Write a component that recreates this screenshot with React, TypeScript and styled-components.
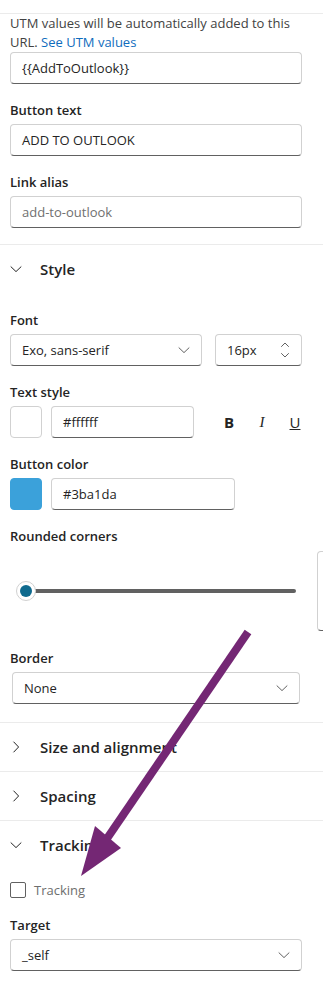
import React from 'react';
import styled, { createGlobalStyle } from 'styled-components';

const GlobalStyle = createGlobalStyle`
  html, body {
    margin: 0;
    padding: 0;
    background: #ffffff;
    overflow: hidden;
  }
  body {
    font-family: "Segoe UI", "Open Sans", "Liberation Sans", sans-serif;
    color: #242424;
  }
`;

const Panel = styled.div`
  position: relative;
  width: 323px;
  height: 993px;
  overflow: hidden;
  background: #ffffff;
  padding-top: 13px;
  box-sizing: border-box;
`;

const Section = styled.div<{ $top?: number; $bottom?: number; $gap?: number; $line?: boolean }>`
  display: flex;
  flex-direction: column;
  gap: ${(p) => p.$gap ?? 16}px;
  padding: ${(p) => p.$top ?? 0}px 21px ${(p) => p.$bottom ?? 16}px 10px;
  border-top: ${(p) => (p.$line ? '1px solid #ebebeb' : 'none')};
`;

const Note = styled.p`
  margin: 0;
  font-size: 13px;
  line-height: 19px;
  color: #424242;
`;

const Link = styled.a`
  color: #0f6cbd;
  text-decoration: none;
`;

const Field = styled.div`
  display: flex;
  flex-direction: column;
  gap: 4px;
`;

const Label = styled.label`
  font-size: 13px;
  font-weight: 600;
  line-height: 20px;
  color: #242424;
`;

const Box = styled.div<{ $width?: number; $inset?: number }>`
  display: flex;
  align-items: center;
  box-sizing: border-box;
  height: 32px;
  width: ${(p) => (p.$width ? `${p.$width}px` : 'auto')};
  margin: 0 ${(p) => p.$inset ?? 0}px;
  padding: 0 11px;
  border: 1px solid #d1d1d1;
  border-bottom-color: #616161;
  border-radius: 4px;
  font-size: 13px;
  color: #242424;
  background: #ffffff;
`;

const Value = styled.span<{ $muted?: boolean }>`
  flex: 1;
  color: ${(p) => (p.$muted ? '#707070' : '#242424')};
`;

const Row = styled.div<{ $gap?: number }>`
  display: flex;
  align-items: center;
  gap: ${(p) => p.$gap ?? 9}px;
`;

const Swatch = styled.div<{ $color: string }>`
  width: 32px;
  height: 32px;
  flex: none;
  box-sizing: border-box;
  border-radius: 4px;
  background: ${(p) => p.$color};
  border: 1px solid ${(p) => (p.$color === '#ffffff' ? '#d1d1d1' : '#3ba1da')};
`;

const Formats = styled.div`
  display: flex;
  align-items: center;
  gap: 19px;
  margin-left: 19px;
`;

const FormatButton = styled.span<{ $kind: 'b' | 'i' | 'u' }>`
  width: 14px;
  text-align: center;
  font-size: 15px;
  line-height: 20px;
  color: #242424;
  font-weight: ${(p) => (p.$kind === 'b' ? 700 : 400)};
  font-style: ${(p) => (p.$kind === 'i' ? 'italic' : 'normal')};
  text-decoration: ${(p) => (p.$kind === 'u' ? 'underline' : 'none')};
  font-family: ${(p) => (p.$kind === 'i' ? '"Liberation Serif", serif' : 'inherit')};
`;

const SliderRow = styled.div`
  display: flex;
  align-items: center;
  height: 82px;
  margin-right: -40px;
`;

const Track = styled.div`
  position: relative;
  flex: none;
  width: 286px;
  height: 24px;
  display: flex;
  align-items: center;
`;

const Rail = styled.div`
  margin-left: 16px;
  width: 270px;
  height: 4px;
  border-radius: 2px;
  background: #616161;
`;

const Thumb = styled.div`
  position: absolute;
  left: 6px;
  top: 2px;
  width: 20px;
  height: 20px;
  box-sizing: border-box;
  border-radius: 50%;
  border: 1px solid #d1d1d1;
  background: #ffffff;
  display: flex;
  align-items: center;
  justify-content: center;

  &::after {
    content: '';
    width: 12px;
    height: 12px;
    border-radius: 50%;
    background: #0f6a8e;
  }
`;

const CutBox = styled.div`
  flex: none;
  margin-left: 21px;
  width: 60px;
  height: 80px;
  box-sizing: border-box;
  border: 1px solid #d1d1d1;
  border-bottom-color: #616161;
  border-radius: 4px;
`;

const Header = styled.div`
  display: flex;
  align-items: center;
  height: 48px;
  padding-left: 10px;
  gap: 18px;
  border-top: 1px solid #ebebeb;
  font-size: 15px;
  font-weight: 600;
  color: #242424;
`;

const Check = styled.div`
  width: 16px;
  height: 16px;
  box-sizing: border-box;
  border: 1px solid #616161;
  border-radius: 2px;
`;

const CheckText = styled.span`
  font-size: 13px;
  line-height: 20px;
  color: #6e6e6e;
`;

const Overlay = styled.svg`
  position: absolute;
  left: 0;
  top: 0;
  pointer-events: none;
`;

const Chevron: React.FC<{ dir: 'down' | 'right'; size?: number; color?: string }> = ({
  dir,
  size = 12,
  color = '#242424',
}) => (
  <svg width={size} height={size} viewBox="0 0 12 12" fill="none">
    {dir === 'down' ? (
      <path d="M1 3.8 6 8.6l5-4.8" stroke={color} strokeWidth="1" strokeLinecap="round" strokeLinejoin="round" />
    ) : (
      <path d="M3.8 1 8.6 6l-4.8 5" stroke={color} strokeWidth="1" strokeLinecap="round" strokeLinejoin="round" />
    )}
  </svg>
);

const Spinner = () => (
  <svg width="10" height="20" viewBox="0 0 10 20" fill="none">
    <path d="M1.5 6.5 5 3l3.5 3.5" stroke="#616161" strokeWidth="1" strokeLinecap="round" strokeLinejoin="round" />
    <path d="M1.5 13.5 5 17l3.5-3.5" stroke="#616161" strokeWidth="1" strokeLinecap="round" strokeLinejoin="round" />
  </svg>
);

const Select: React.FC<{ value: string; width?: number; inset?: number }> = ({ value, width, inset }) => (
  <Box $width={width} $inset={inset}>
    <Value>{value}</Value>
    <Chevron dir="down" color="#616161" />
  </Box>
);

const App: React.FC = () => {
  return (
    <Panel>
      <GlobalStyle />
      <Section $line>
        <div>
          <Note>
            UTM values will be automatically added to this URL. <Link href="#">See UTM values</Link>
          </Note>
          <Box>
            <Value>{'{{AddToOutlook}}'}</Value>
          </Box>
        </div>
        <Field>
          <Label>Button text</Label>
          <Box>
            <Value>ADD TO OUTLOOK</Value>
          </Box>
        </Field>
        <Field>
          <Label>Link alias</Label>
          <Box>
            <Value $muted>add-to-outlook</Value>
          </Box>
        </Field>
      </Section>

      <Header>
        <Chevron dir="down" />
        Style
      </Header>
      <Section $top={17} $bottom={18}>
        <Field>
          <Label>Font</Label>
          <Row $gap={13}>
            <Select value="Exo, sans-serif" width={192} />
            <Box $width={87}>
              <Value>16px</Value>
              <Spinner />
            </Box>
          </Row>
        </Field>
        <Field>
          <Label>Text style</Label>
          <Row>
            <Swatch $color="#ffffff" />
            <Box $width={152}>
              <Value>#ffffff</Value>
            </Box>
            <Formats>
              <FormatButton $kind="b">B</FormatButton>
              <FormatButton $kind="i">I</FormatButton>
              <FormatButton $kind="u">U</FormatButton>
            </Formats>
          </Row>
        </Field>
        <Field>
          <Label>Button color</Label>
          <Row>
            <Swatch $color="#3ba1da" />
            <Box $width={184}>
              <Value>#3ba1da</Value>
            </Box>
          </Row>
        </Field>
        <Field>
          <Label>Rounded corners</Label>
          <SliderRow>
            <Track>
              <Rail />
              <Thumb />
            </Track>
            <CutBox />
          </SliderRow>
        </Field>
        <Field>
          <Label>Border</Label>
          <Select value="None" inset={2} />
        </Field>
      </Section>

      <Header>
        <Chevron dir="right" />
        Size and alignment
      </Header>
      <Header>
        <Chevron dir="right" />
        Spacing
      </Header>
      <Header>
        <Chevron dir="down" />
        Tracking
      </Header>
      <Section $top={11} $gap={15}>
        <Row $gap={8}>
          <Check />
          <CheckText>Tracking</CheckText>
        </Row>
        <Field>
          <Label>Target</Label>
          <Select value="_self" />
        </Field>
      </Section>

      <Overlay width="323" height="993" viewBox="0 0 323 993">
        <line x1="248" y1="632" x2="106" y2="840" stroke="#742774" strokeWidth="8" />
        <polygon points="81,876 95,826 121,848" fill="#742774" />
      </Overlay>
    </Panel>
  );
};

export default App;
